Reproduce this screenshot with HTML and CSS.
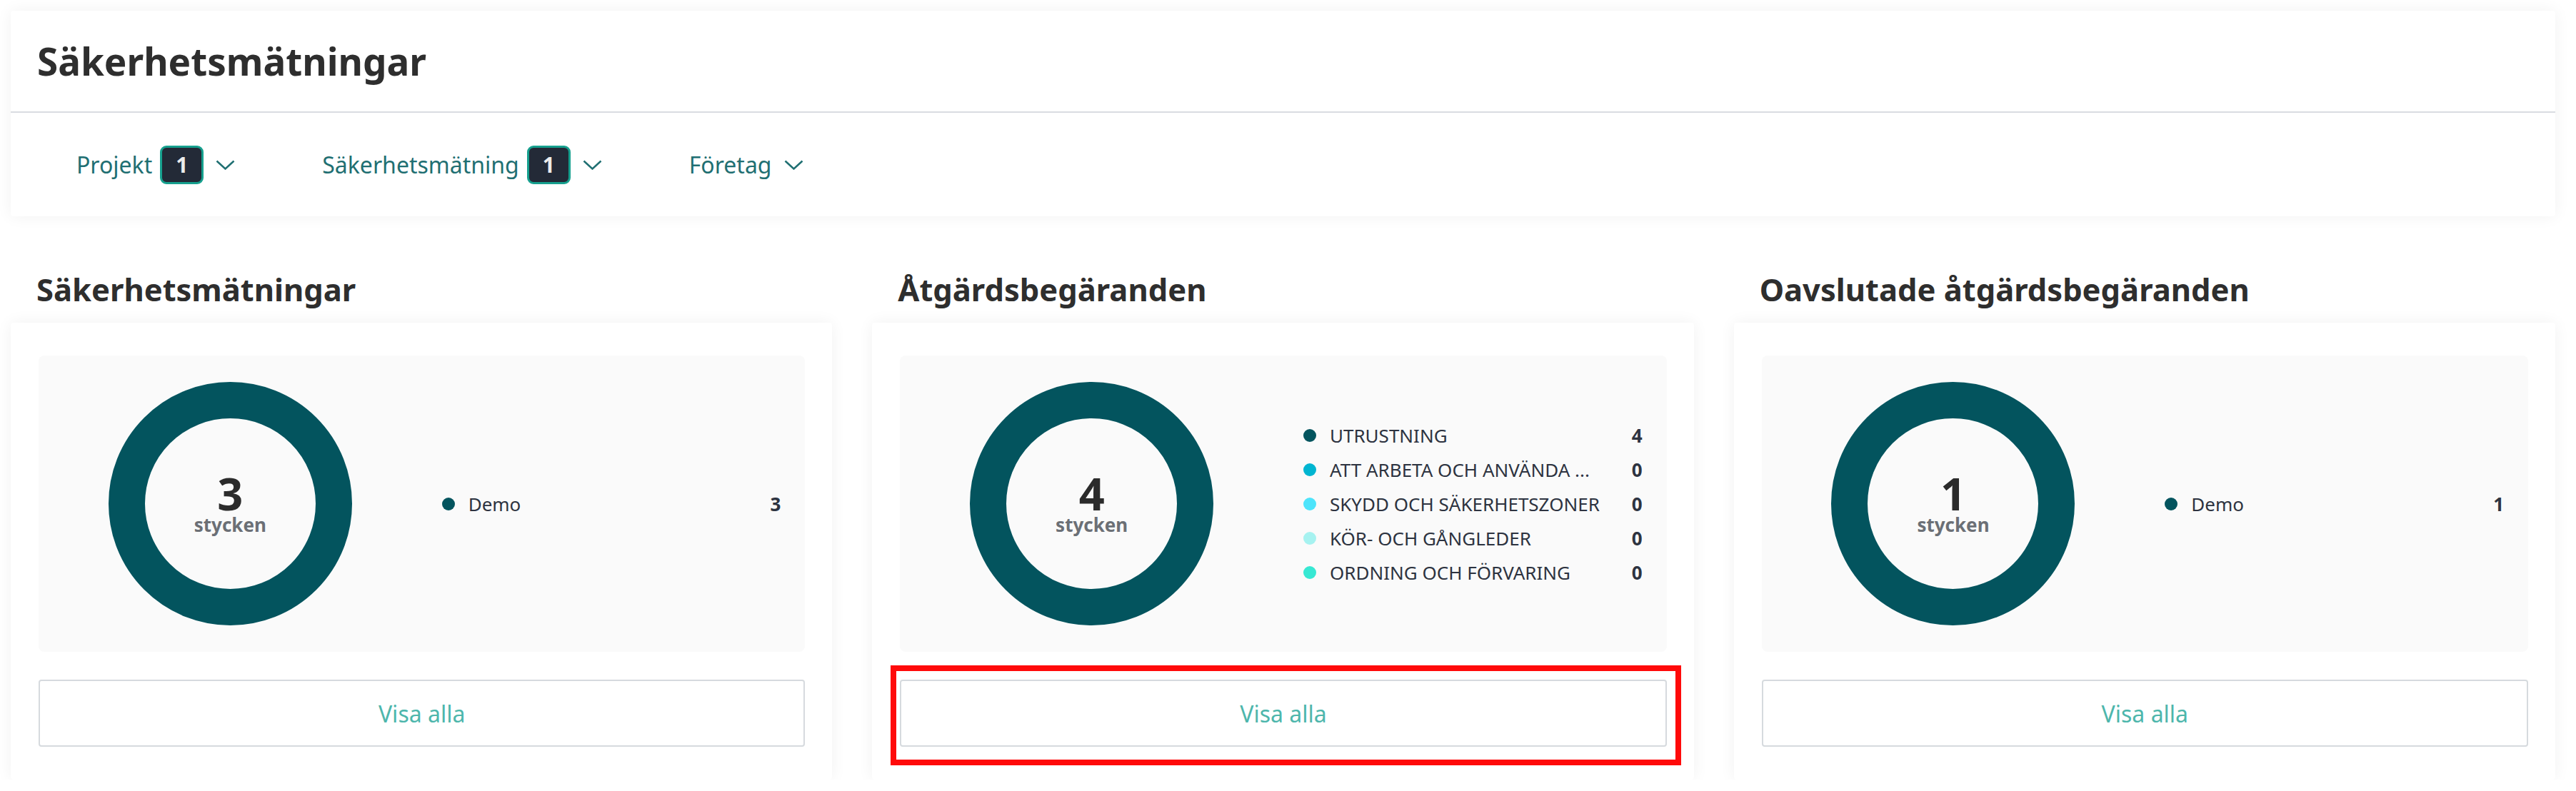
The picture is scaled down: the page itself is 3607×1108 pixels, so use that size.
FILE: index.html
```html
<!DOCTYPE html>
<html lang="sv">
<head>
    <meta charset="UTF-8">
    <meta name="viewport" content="width=device-width, initial-scale=1.0">
    <title>Säkerhetsmätningar</title>
    <link rel="stylesheet" href="styles.css">
</head>
<body>
    <div class="page-header">
        <h1 class="page-title">Säkerhetsmätningar</h1>
        <div class="filters">
            <button class="filter">
                <span>Projekt</span>
                <span class="badge">1</span>
                <svg class="chevron" viewBox="0 0 27 14"><polyline points="1.5,1.5 13.5,12.5 25.5,1.5"/></svg>
            </button>
            <button class="filter">
                <span>Säkerhetsmätning</span>
                <span class="badge">1</span>
                <svg class="chevron" viewBox="0 0 27 14"><polyline points="1.5,1.5 13.5,12.5 25.5,1.5"/></svg>
            </button>
            <button class="filter">
                <span>Företag</span>
                <svg class="chevron" viewBox="0 0 27 14"><polyline points="1.5,1.5 13.5,12.5 25.5,1.5"/></svg>
            </button>
        </div>
    </div>

    <div class="sections">
        <section class="section">
            <h2 class="section-title">Säkerhetsmätningar</h2>
            <div class="card">
                <div class="chart">
                    <div class="donut-wrap">
                        <div class="donut">
                            <span class="donut-count">3</span>
                            <span class="donut-unit">stycken</span>
                        </div>
                    </div>
                    <ul class="legend">
                        <li><span class="dot c1"></span><span class="label">Demo</span><span class="value">3</span></li>
                    </ul>
                </div>
                <div class="action">
                    <button class="show-all">Visa alla</button>
                </div>
            </div>
        </section>

        <section class="section">
            <h2 class="section-title">Åtgärdsbegäranden</h2>
            <div class="card">
                <div class="chart">
                    <div class="donut-wrap">
                        <div class="donut">
                            <span class="donut-count">4</span>
                            <span class="donut-unit">stycken</span>
                        </div>
                    </div>
                    <ul class="legend">
                        <li><span class="dot c1"></span><span class="label">UTRUSTNING</span><span class="value">4</span></li>
                        <li><span class="dot c2"></span><span class="label">ATT ARBETA OCH ANVÄNDA ...</span><span class="value">0</span></li>
                        <li><span class="dot c3"></span><span class="label">SKYDD OCH SÄKERHETSZONER</span><span class="value">0</span></li>
                        <li><span class="dot c4"></span><span class="label">KÖR- OCH GÅNGLEDER</span><span class="value">0</span></li>
                        <li><span class="dot c5"></span><span class="label">ORDNING OCH FÖRVARING</span><span class="value">0</span></li>
                    </ul>
                </div>
                <div class="action">
                    <button class="show-all">Visa alla</button>
                    <div class="highlight"></div>
                </div>
            </div>
        </section>

        <section class="section">
            <h2 class="section-title">Oavslutade åtgärdsbegäranden</h2>
            <div class="card">
                <div class="chart">
                    <div class="donut-wrap">
                        <div class="donut">
                            <span class="donut-count">1</span>
                            <span class="donut-unit">stycken</span>
                        </div>
                    </div>
                    <ul class="legend">
                        <li><span class="dot c1"></span><span class="label">Demo</span><span class="value">1</span></li>
                    </ul>
                </div>
                <div class="action">
                    <button class="show-all">Visa alla</button>
                </div>
            </div>
        </section>
    </div>
</body>
</html>
```

FILE: styles.css
```css
body {
    margin: 0;
    padding: 15px 29px 0 15px;
    font-family: "Noto Sans", "Open Sans", sans-serif;
    background: #ffffff;
    color: #2e2e2e;
}

.page-header {
    background: #fff;
    border-radius: 4px;
    box-shadow: 0 0 22px rgba(0, 0, 0, 0.06);
}

.page-title {
    margin: 0;
    height: 141px;
    display: flex;
    align-items: center;
    padding: 0 37px;
    font-size: 53px;
    font-weight: 700;
    color: #2e2e2e;
    border-bottom: 2px solid #d9dce1;
}

.filters {
    height: 145px;
    display: flex;
    align-items: center;
    gap: 122px;
    padding-left: 92px;
}

.filter {
    display: flex;
    align-items: center;
    padding: 0;
    border: none;
    background: none;
    font-family: inherit;
    font-size: 32px;
    color: #1f6f72;
    cursor: pointer;
}

.badge {
    width: 61px;
    height: 54px;
    box-sizing: border-box;
    margin-left: 11px;
    display: flex;
    align-items: center;
    justify-content: center;
    background: #232a37;
    border: 3px solid #16a08e;
    border-radius: 9px;
    color: #ececec;
    font-size: 30px;
    font-weight: 700;
}

.chevron {
    width: 27px;
    height: 14px;
    margin-left: 17px;
    fill: none;
    stroke: #1f6f72;
    stroke-width: 2.5;
}

.sections {
    display: grid;
    grid-template-columns: repeat(3, 1fr);
    column-gap: 56px;
}

.section-title {
    margin: 72px 0 17px;
    padding-left: 36px;
    font-size: 43.5px;
    line-height: 60px;
    font-weight: 700;
    color: #2e2e2e;
}

.card {
    background: #fff;
    border-radius: 4px;
    box-shadow: 0 0 22px rgba(0, 0, 0, 0.06);
    padding: 46px 38px 46px 39px;
}

.chart {
    height: 415px;
    display: grid;
    grid-template-columns: 1fr 1fr;
    background: #fafafa;
    border-radius: 8px;
}

.donut-wrap {
    display: flex;
    align-items: center;
    justify-content: center;
}

.donut {
    width: 341px;
    height: 341px;
    box-sizing: border-box;
    border: 51px solid #03545e;
    border-radius: 50%;
    display: flex;
    flex-direction: column;
    align-items: center;
    justify-content: center;
    gap: 2px;
}

.donut-count {
    font-size: 63px;
    font-weight: 700;
    line-height: 56px;
    color: #2b2b2b;
}

.donut-unit {
    font-size: 26px;
    font-weight: 700;
    line-height: 28px;
    color: #6b6f75;
}

.legend {
    list-style: none;
    margin: 0;
    padding: 0 34px 0 28px;
    display: flex;
    flex-direction: column;
    justify-content: center;
}

.legend li {
    height: 48px;
    display: flex;
    align-items: center;
    font-size: 26px;
    color: #2d3340;
}

.dot {
    width: 18px;
    height: 18px;
    border-radius: 50%;
    margin-right: 19px;
    flex-shrink: 0;
}

.c1 { background: #03545e; }
.c2 { background: #00b5d1; }
.c3 { background: #4de4fb; }
.c4 { background: #a6f2f0; }
.c5 { background: #37e8d3; }

.label {
    flex: 1;
    white-space: nowrap;
}

.value {
    font-weight: 700;
    margin-left: 20px;
}

.action {
    position: relative;
    margin-top: 39px;
}

.show-all {
    width: 100%;
    height: 94px;
    display: block;
    background: #fff;
    border: 2px solid #d6dade;
    border-radius: 4px;
    font-family: inherit;
    font-size: 32px;
    color: #4db6ac;
    cursor: pointer;
}

.highlight {
    position: absolute;
    top: -20px;
    left: -13px;
    right: -20px;
    bottom: -26px;
    border: 8px solid #ff0a0a;
    pointer-events: none;
}
```
